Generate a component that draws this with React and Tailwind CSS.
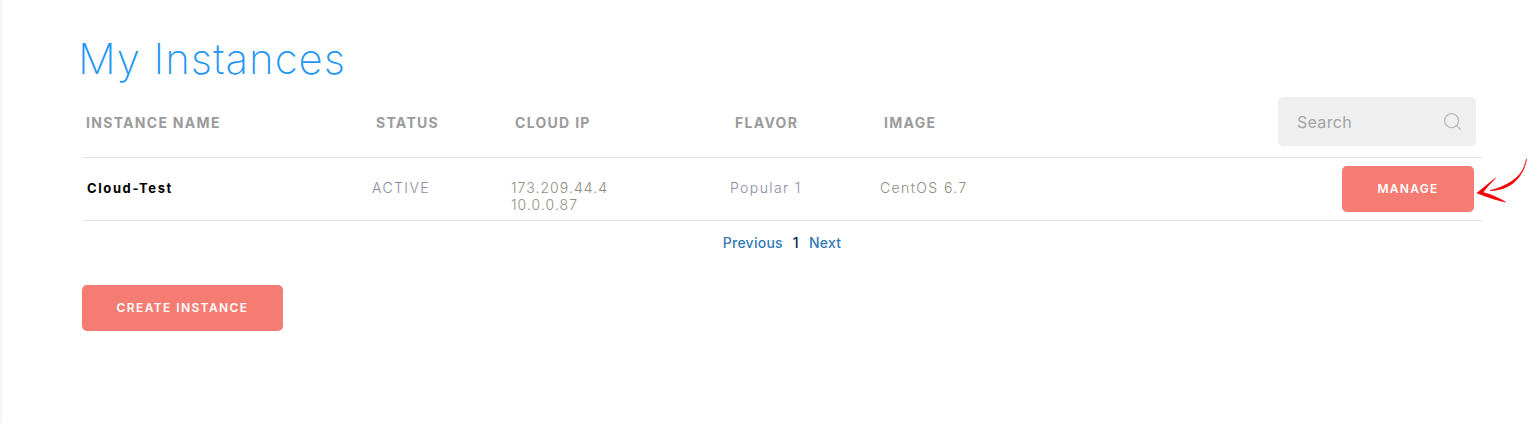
import React from 'react';
import { Search } from 'lucide-react';

const fontStack = "font-['Inter','Liberation_Sans',sans-serif]";

// column tracks shared by header and rows
const columns = 'grid grid-cols-[290px_139px_219px_150px_1fr]';

const HeaderCell = ({ children }) => (
  <div className="pl-1 text-[14px] font-bold tracking-[1.3px] text-[#9b9b9b] whitespace-nowrap">{children}</div>
);

const Arrow = () => (
  <svg className="absolute left-[1474px] top-[157px]" width="54" height="50" viewBox="0 0 54 50" fill="#f00000">
    <path d="M50.5 2 C48.5 12 43 26 14 33.5 C31 33.5 46.5 24 50.5 2 Z" stroke="#f00000" strokeWidth="0.6" />
    <path d="M1 36 L19.5 21 C14 27 10 31 7 35.5 C14 37 23 41 29.5 45 C20 43 9 39.5 1 36 Z" stroke="#f00000" strokeWidth="0.6" />
  </svg>
);

const App = () => {
  return (
    <div className={`${fontStack} relative h-[423px] bg-white border-l-2 border-[#f4f4fa] pl-[80px] pr-[57px]`}>
      <h1 className="-ml-[4px] pt-[33px] text-[42px] leading-[52px] font-extralight text-[#2196f3] tracking-[0.95px]">My Instances</h1>

      <div className="h-[73px] border-b border-[#e3e3e3] relative">
        <div className={`${columns} pt-[27px]`}>
          <HeaderCell>INSTANCE NAME</HeaderCell>
          <HeaderCell>STATUS</HeaderCell>
          <HeaderCell>CLOUD IP</HeaderCell>
          <div className="pl-[1px]"><HeaderCell>FLAVOR</HeaderCell></div>
          <HeaderCell>IMAGE</HeaderCell>
        </div>
        <div className="absolute right-[6px] top-[12px] w-[198px] h-[49px] rounded-[5px] bg-[#efefef] flex items-center justify-between pl-[19px] pr-[13px]">
          <span className="text-[16px] tracking-[0.3px] text-[#a3a3a3]">Search</span>
          <Search size={21} strokeWidth={1.6} className="text-[#bdbdbd]" />
        </div>
      </div>

      <div className={`${columns} h-[63px] border-b border-[#e3e3e3] items-center text-[14px] font-light tracking-[1.4px] text-[#8d89a3]`}>
        <div className="pl-[5px] pb-[1px] text-[13px] font-bold tracking-[1.6px] text-black">Cloud-Test</div>
        <div className="pb-[3px]">ACTIVE</div>
        <div className="leading-[17px] pt-[13px] tracking-[1.05px] text-[#8f8c82]">
          <div>173.209.44.4</div>
          <div>10.0.0.87</div>
        </div>
        <div className="pb-[3px]">Popular 1</div>
        <div className="flex items-center justify-between text-[#8f8c82]">
          <span className="pb-[3px]">CentOS 6.7</span>
          <button className="mr-[8px] w-[132px] h-[46px] rounded-[5px] bg-[#f47c73] text-white text-[12px] font-semibold tracking-[1.25px]">MANAGE</button>
        </div>
      </div>

      <div className="flex justify-center gap-[10px] pt-[14px] text-[14px] font-medium leading-[16px] tracking-[0.25px] text-[#337ab7]">
        <span>Previous</span>
        <span className="text-[#0b1f4a]">1</span>
        <span>Next</span>
      </div>

      <button className="mt-[34px] w-[201px] h-[46px] rounded-[5px] bg-[#f47c73] text-white text-[12px] font-semibold tracking-[1.4px]">CREATE INSTANCE</button>

      <Arrow />
    </div>
  );
};

export default App;
